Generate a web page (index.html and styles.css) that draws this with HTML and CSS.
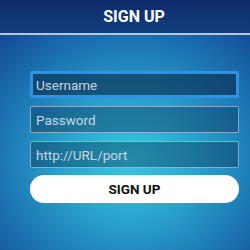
FILE: index.html
```html
<!DOCTYPE html>
<html lang="en">
<head>
    <meta charset="UTF-8">
    <meta name="viewport" content="width=device-width, initial-scale=1.0">
    <title>Sign Up</title>
    <link rel="stylesheet" href="styles.css">
</head>
<body>
    <div class="header">
        <h2>SIGN UP</h2>
    </div>

    <form class="signup-form">
        <input type="text" class="field active" placeholder="Username">
        <input type="password" class="field" placeholder="Password">
        <input type="text" class="field" placeholder="http://URL/port">
        <button type="button" class="signup-btn">SIGN UP</button>
    </form>
</body>
</html>
```

FILE: styles.css
```css
body {
    font-family: Roboto, 'Liberation Sans', Arial, sans-serif;
    margin: 0;
    padding: 0;
    width: 250px;
    height: 250px;
    overflow: hidden;
    background: radial-gradient(ellipse 210px 190px at 52% 64%, #38c8e2 0%, #2aa6d0 30%, #1d78b4 60%, #14519a 85%, #103e84 100%);
    background-color: #0f3476;
}

.header {
    height: 33px;
    display: flex;
    align-items: center;
    justify-content: center;
    padding-left: 18px;
    border-bottom: 2px solid #b9c6da;
    box-sizing: content-box;
    background: linear-gradient(180deg, #0e2b6a 0%, #133e7e 100%);
}

h2 {
    margin: 0;
    color: #ffffff;
    font-size: 16px;
    font-weight: 700;
}

.signup-form {
    display: flex;
    flex-direction: column;
    gap: 8px;
    margin: 36px 11px 0 30px;
}

.field {
    height: 27px;
    box-sizing: border-box;
    padding: 0 5px;
    border: 1px solid rgba(200, 220, 235, 0.6);
    border-radius: 2px;
    background-color: rgba(8, 45, 75, 0.4);
    color: #e2ecf2;
    font-family: Roboto, 'Liberation Sans', Arial, sans-serif;
    font-size: 13.5px;
    outline: none;
}

.field::placeholder {
    color: #c9d6df;
}

.field.active {
    border: 3px solid #2f92e4;
    padding-left: 3px;
    background-color: rgba(8, 40, 70, 0.6);
}

.signup-btn {
    height: 28px;
    margin-top: -1px;
    border: none;
    border-radius: 14px;
    background-color: #ffffff;
    color: #111111;
    font-family: Roboto, 'Liberation Sans', Arial, sans-serif;
    font-size: 13.5px;
    font-weight: 700;
    cursor: pointer;
}
```
